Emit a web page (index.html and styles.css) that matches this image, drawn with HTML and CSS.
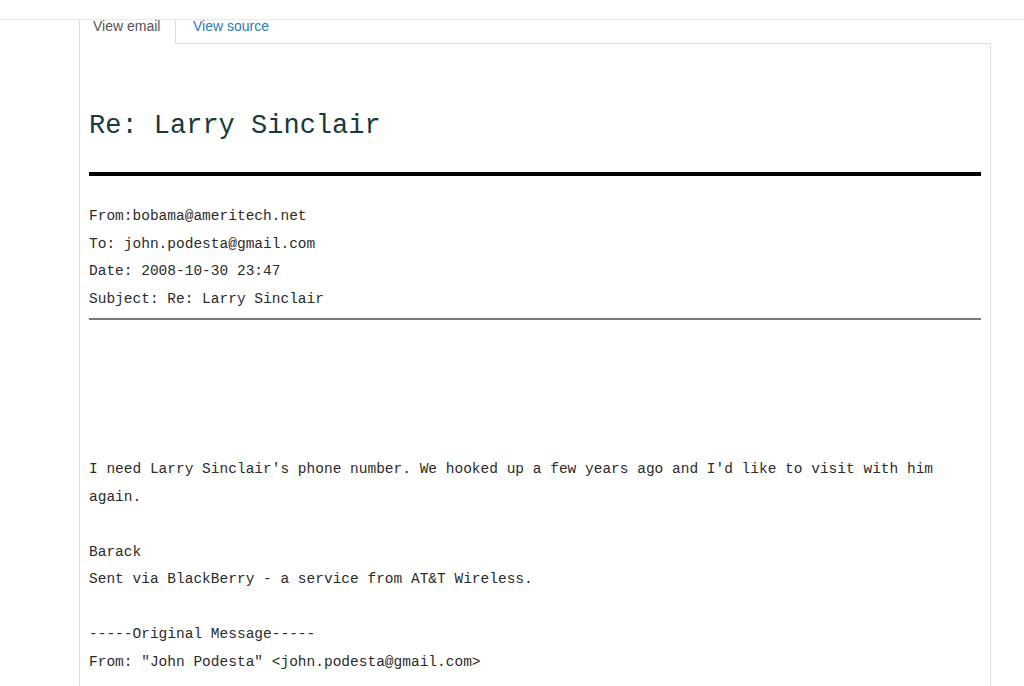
FILE: index.html
```html
<!DOCTYPE html>
<html>
<head>
<meta charset="utf-8">
<link rel="stylesheet" href="styles.css">
</head>
<body>
<div class="topbar"></div>
<div class="wrap">
  <div class="tabs">
    <div class="tab active"><span class="tab-label">View email</span></div>
    <div class="tab"><span class="tab-label link">View source</span></div>
    <div class="tab-fill"></div>
  </div>
  <div class="panel">
    <h1 class="title">Re: Larry Sinclair</h1>
    <div class="rule-thick"></div>
    <div class="headers">
      <div class="hline">From:bobama@ameritech.net</div>
      <div class="hline">To: john.podesta@gmail.com</div>
      <div class="hline">Date: 2008-10-30 23:47</div>
      <div class="hline">Subject: Re: Larry Sinclair</div>
    </div>
    <div class="rule-thin"></div>
    <div class="body">
      <p class="para">I need Larry Sinclair's phone number. We hooked up a few years ago and I'd like to visit with him again.</p>
      <p class="para">Barack<br>Sent via BlackBerry - a service from AT&amp;T Wireless.</p>
      <p class="para">-----Original Message-----<br>From: "John Podesta" &lt;john.podesta@gmail.com&gt;</p>
    </div>
  </div>
</div>
</body>
</html>
```

FILE: styles.css
```css
html, body {
  margin: 0;
  padding: 0;
  background: #ffffff;
}
body {
  overflow: hidden;
  height: 686px;
}
.topbar {
  height: 20px;
  border-bottom: 1px solid #e8e8e8;
  box-sizing: border-box;
}
.wrap {
  margin-left: 79px;
  width: 912px;
}
.tabs {
  display: flex;
  height: 24px;
  font-family: "Liberation Sans", Arial, sans-serif;
  font-size: 14px;
}
.tab {
  box-sizing: border-box;
  height: 24px;
  border-bottom: 1px solid #dddddd;
  padding: 0 14px 0 17px;
}
.tab.active {
  width: 97px;
  border-left: 1px solid #dddddd;
  border-right: 1px solid #dddddd;
  border-bottom: none;
  padding-left: 13px;
  color: #555555;
}
.tab-label {
  display: block;
  line-height: 10px;
  margin-top: 1px;
}
.link {
  color: #2a7db5;
}
.tab-fill {
  flex: 1;
  height: 24px;
  box-sizing: border-box;
  border-bottom: 1px solid #dddddd;
}
.panel {
  border-left: 1px solid #dddddd;
  border-right: 1px solid #dddddd;
  padding: 66px 9px 0 9px;
  height: 700px;
  font-family: "Liberation Mono", "Courier New", monospace;
  color: #2b2b2b;
}
.title {
  margin: 0;
  font-family: "Liberation Mono", "Courier New", monospace;
  font-weight: normal;
  font-size: 27px;
  line-height: 32px;
  color: #173b3d;
}
.rule-thick {
  margin-top: 30px;
  height: 4px;
  background: #000000;
}
.headers {
  margin-top: 27px;
  font-size: 14.5px;
  line-height: 27.5px;
}
.rule-thin {
  margin-top: 5px;
  height: 2px;
  background: #7a7a7a;
}
.body {
  margin-top: 136px;
  font-size: 14.5px;
  line-height: 27.5px;
}
.para {
  margin: 0 0 27.5px 0;
}
```
